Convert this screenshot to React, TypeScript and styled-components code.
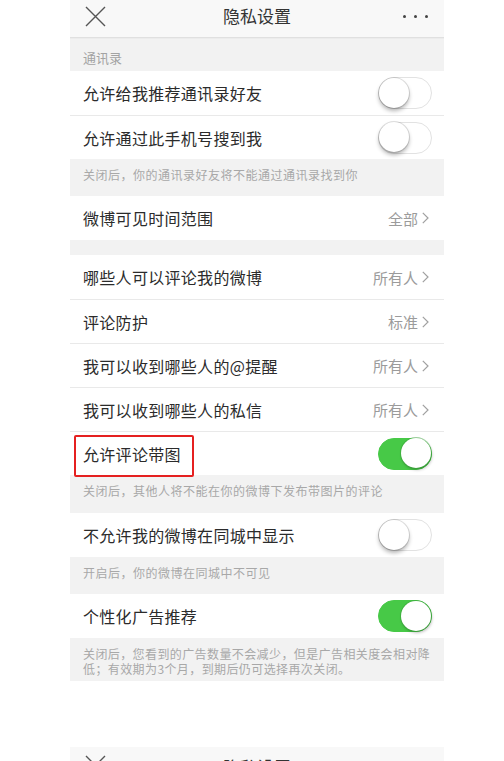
import React from 'react'
import styled, { createGlobalStyle } from 'styled-components'

const GlobalStyle = createGlobalStyle`
  * { box-sizing: border-box; }
  body {
    margin: 0;
    background: #ffffff;
    font-family: "Noto Sans CJK SC", "Noto Sans", sans-serif;
  }
`

const Page = styled.div`
  width: 374px;
  margin-left: 70px;
`

const Screen = styled.div`
  background: #f2f2f2;
`

const NavBar = styled.header<{ $cut?: boolean }>`
  height: ${(p) => (p.$cut ? '44px' : '38px')};
  background: #f8f8f8;
  border-bottom: 1px solid #e0e0e0;
  box-shadow: 0 1px 0 #ececec;
  display: flex;
  align-items: ${(p) => (p.$cut ? 'flex-start' : 'center')};
  padding: ${(p) => (p.$cut ? '8px 16px 0 15px' : '0 16px 5px 15px')};
  position: relative;
`

const NavTitle = styled.div<{ $cut?: boolean }>`
  position: absolute;
  left: 0;
  right: 0;
  top: ${(p) => (p.$cut ? '10px' : 'auto')};
  text-align: center;
  font-size: 17px;
  color: #333;
  line-height: 20px;
  pointer-events: none;
`

const NavSpacer = styled.div`
  flex: 1;
`

const Dots = styled.div`
  display: flex;
  gap: 8px;

  span {
    width: 3px;
    height: 3px;
    border-radius: 50%;
    background: #444;
  }
`

const SectionLabel = styled.div`
  padding: 12px 13px 5px;
  font-size: 13px;
  line-height: 16px;
  color: #a3a3a3;
`

const Group = styled.div`
  background: #fff;
`

const Row = styled.div`
  position: relative;
  height: 44px;
  display: flex;
  align-items: center;
  padding: 0 12px 0 13px;
  background: #fff;

  & + & {
    border-top: 1px solid #e9e9e9;
  }
`

const RowLabel = styled.div`
  flex: 1;
  font-size: 16px;
  color: #2b2b2b;
  letter-spacing: 0.3px;
`

const Value = styled.div`
  display: flex;
  align-items: center;
  gap: 4px;
  font-size: 15px;
  color: #9b9b9b;
  padding-right: 3px;
`

const Switch = styled.div<{ $on?: boolean }>`
  position: relative;
  width: 54px;
  height: 32px;
  border-radius: 16px;
  background: ${(p) => (p.$on ? '#47c947' : '#fff')};
  border: 1.5px solid ${(p) => (p.$on ? '#47c947' : '#e2e2e2')};

  &::after {
    content: '';
    position: absolute;
    top: -0.5px;
    left: ${(p) => (p.$on ? '22px' : '-0.5px')};
    width: 30px;
    height: 30px;
    border-radius: 50%;
    background: #fff;
    box-shadow: ${(p) =>
      p.$on
        ? '0 0 0 1px rgba(60,160,60,0.5), 1px 2px 3px rgba(0,0,0,0.25)'
        : '0 0 0 1px rgba(0,0,0,0.12), 0 3px 4px rgba(0,0,0,0.3)'};
  }
`

const Note = styled.div<{ $pt?: number; $pb: number }>`
  padding: ${(p) => p.$pt ?? 9}px 13px ${(p) => p.$pb}px;
  font-size: 12px;
  line-height: 14px;
  color: #a8a8a8;
  letter-spacing: 0.5px;
`

const NoteLine = styled.span`
  display: block;
  white-space: nowrap;
  letter-spacing: 0.4px;
  line-height: 15px;
`

const Gap = styled.div`
  height: 15px;
`

const Highlight = styled.div`
  position: absolute;
  left: 4px;
  top: 3px;
  width: 120px;
  height: 42px;
  border: 2px solid #e52020;
  border-radius: 2px;
  z-index: 2;
`

const Blank = styled.div`
  height: 66px;
  background: #fff;
`

const CloseIcon = () => (
  <svg width="21" height="21" viewBox="0 0 21 21">
    <path d="M1 1 L20 20 M20 1 L1 20" stroke="#555" strokeWidth="1.4" fill="none" />
  </svg>
)

const Chevron = () => (
  <svg width="7" height="12" viewBox="0 0 7 12">
    <path d="M0.8 0.8 L6 6 L0.8 11.2" stroke="#a0a0a0" strokeWidth="1.2" fill="none" />
  </svg>
)

const Nav: React.FC<{ cut?: boolean }> = ({ cut }) => (
  <NavBar $cut={cut}>
    <CloseIcon />
    <NavTitle $cut={cut}>隐私设置</NavTitle>
    <NavSpacer />
    {!cut && (
      <Dots>
        <span />
        <span />
        <span />
      </Dots>
    )}
  </NavBar>
)

const ToggleRow: React.FC<{ label: string; on?: boolean; marked?: boolean }> = ({ label, on, marked }) => (
  <Row>
    {marked && <Highlight />}
    <RowLabel>{label}</RowLabel>
    <Switch $on={on} />
  </Row>
)

const LinkRow: React.FC<{ label: string; value: string }> = ({ label, value }) => (
  <Row>
    <RowLabel>{label}</RowLabel>
    <Value>
      {value}
      <Chevron />
    </Value>
  </Row>
)

export default function App() {
  return (
    <>
      <GlobalStyle />
      <Page>
        <Screen>
          <Nav />
          <SectionLabel>通讯录</SectionLabel>
          <Group>
            <ToggleRow label="允许给我推荐通讯录好友" />
            <ToggleRow label="允许通过此手机号搜到我" />
          </Group>
          <Note $pb={14}>关闭后，你的通讯录好友将不能通过通讯录找到你</Note>
          <Group>
            <LinkRow label="微博可见时间范围" value="全部" />
          </Group>
          <Gap />
          <Group>
            <LinkRow label="哪些人可以评论我的微博" value="所有人" />
            <LinkRow label="评论防护" value="标准" />
            <LinkRow label="我可以收到哪些人的@提醒" value="所有人" />
            <LinkRow label="我可以收到哪些人的私信" value="所有人" />
            <ToggleRow label="允许评论带图" on marked />
          </Group>
          <Note $pb={15}>关闭后，其他人将不能在你的微博下发布带图片的评论</Note>
          <Group>
            <ToggleRow label="不允许我的微博在同城中显示" />
          </Group>
          <Note $pb={14}>开启后，你的微博在同城中不可见</Note>
          <Group>
            <ToggleRow label="个性化广告推荐" on />
          </Group>
          <Note $pt={8} $pb={5}>
            <NoteLine>关闭后，您看到的广告数量不会减少，但是广告相关度会相对降</NoteLine>
            <NoteLine>低；有效期为3个月，到期后仍可选择再次关闭。</NoteLine>
          </Note>
        </Screen>
        <Blank />
        <Nav cut />
      </Page>
    </>
  )
}
